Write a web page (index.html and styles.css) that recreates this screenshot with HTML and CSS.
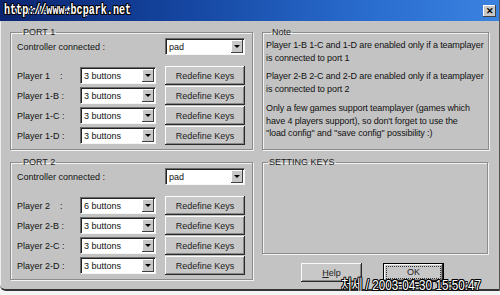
FILE: index.html
```html
<!DOCTYPE html>
<html lang="en">
<head>
  <meta charset="UTF-8">
  <title>Controller Setting</title>
  <link rel="stylesheet" href="styles.css">
</head>
<body>
  <div class="window">
    <div class="titlebar">
      <span class="title">Controller Setting</span>
      <span class="close">&#x2715;</span>
    </div>

    <div class="content">
      <div class="col left">
        <fieldset class="group port">
          <legend>PORT 1</legend>
          <div class="row ctrl">
            <span class="label wide">Controller connected :</span>
            <div class="combo pad"><span>pad</span><i></i></div>
          </div>
          <div class="row player">
            <span class="label">Player 1&nbsp;&nbsp;&nbsp;&nbsp;:</span>
            <div class="combo"><span>3 buttons</span><i></i></div>
            <button class="btn">Redefine Keys</button>
          </div>
          <div class="row player">
            <span class="label">Player 1-B :</span>
            <div class="combo"><span>3 buttons</span><i></i></div>
            <button class="btn">Redefine Keys</button>
          </div>
          <div class="row player">
            <span class="label">Player 1-C :</span>
            <div class="combo"><span>3 buttons</span><i></i></div>
            <button class="btn">Redefine Keys</button>
          </div>
          <div class="row player">
            <span class="label">Player 1-D :</span>
            <div class="combo"><span>3 buttons</span><i></i></div>
            <button class="btn">Redefine Keys</button>
          </div>
        </fieldset>

        <fieldset class="group port">
          <legend>PORT 2</legend>
          <div class="row ctrl">
            <span class="label wide">Controller connected :</span>
            <div class="combo pad"><span>pad</span><i></i></div>
          </div>
          <div class="row player">
            <span class="label">Player 2&nbsp;&nbsp;&nbsp;&nbsp;:</span>
            <div class="combo"><span>6 buttons</span><i></i></div>
            <button class="btn">Redefine Keys</button>
          </div>
          <div class="row player">
            <span class="label">Player 2-B :</span>
            <div class="combo"><span>3 buttons</span><i></i></div>
            <button class="btn">Redefine Keys</button>
          </div>
          <div class="row player">
            <span class="label">Player 2-C :</span>
            <div class="combo"><span>3 buttons</span><i></i></div>
            <button class="btn">Redefine Keys</button>
          </div>
          <div class="row player">
            <span class="label">Player 2-D :</span>
            <div class="combo"><span>3 buttons</span><i></i></div>
            <button class="btn">Redefine Keys</button>
          </div>
        </fieldset>
      </div>

      <div class="col right">
        <fieldset class="group note">
          <legend>Note</legend>
          <p>Player 1-B 1-C and 1-D are enabled only if a teamplayer<br>is connected to port 1</p>
          <p>Player 2-B 2-C and 2-D are enabled only if a teamplayer<br>is connected to port 2</p>
          <p>Only a few games support teamplayer (games which<br>have 4 players support), so don't forget to use the<br>''load config'' and ''save config'' possibility :)</p>
        </fieldset>

        <fieldset class="group keys">
          <legend>SETTING KEYS</legend>
        </fieldset>

        <div class="actions">
          <button class="btn"><u>H</u>elp</button>
          <button class="btn default"><span>OK</span></button>
        </div>
      </div>
    </div>

    <div class="stamp site">http://www.bcpark.net</div>
    <div class="stamp date">처세 / 2003-04-30 15:50:47</div>
  </div>
</body>
</html>
```

FILE: styles.css
```css
body {
  margin: 0;
  background: #f4f4f4;
  font-family: "Liberation Sans", Arial, sans-serif;
  font-size: 9px;
  color: #111;
}
.window {
  position: relative;
  width: 499px;
  height: 289px;
  background: #c3c3c3;
  border-right: 1px solid #555;
  border-bottom: 2px solid #333;
  border-bottom-left-radius: 6px;
  box-shadow: inset 1px 0 0 #eee;
}
.titlebar {
  height: 21px;
  background: linear-gradient(to right, #0a2470 0%, #14449e 35%, #2a6ed0 75%, #3a82e0 100%);
  display: flex;
  align-items: center;
  justify-content: space-between;
  padding: 0 3px 0 4px;
}
.title {
  color: #fff;
  font-weight: bold;
  font-size: 10px;
}
.close {
  width: 13px;
  height: 12px;
  background: #c8c8c8;
  box-shadow: inset -1px -1px #404040, inset 1px 1px #fff;
  font-size: 9px;
  font-weight: bold;
  line-height: 12px;
  text-align: center;
  color: #000;
}
.content {
  display: flex;
  gap: 9px;
  padding: 6px 11px 0 10px;
}
.col {
  display: flex;
  flex-direction: column;
}
.left {
  width: 243px;
  gap: 7px;
}
.right {
  width: 226px;
}
.group {
  margin: 0;
  padding: 0;
  border: 1px solid #8c8c8c;
  box-shadow: 1px 1px 0 #f2f2f2, inset 1px 1px 0 #f2f2f2;
  box-sizing: border-box;
}
legend {
  padding: 0 1px;
  margin-left: 5px;
  line-height: 11px;
  color: #222;
}
.port {
  height: 123px;
  padding: 0 7px 0 6px;
}
.row {
  display: flex;
  align-items: center;
}
.ctrl {
  justify-content: space-between;
  height: 17px;
  margin-bottom: 11px;
}
.player {
  height: 19px;
  margin-bottom: 1px;
}
.label {
  width: 63px;
  white-space: pre;
}
.label.wide {
  width: auto;
}
.combo {
  width: 76px;
  height: 17px;
  box-sizing: border-box;
  background: #fff;
  border: 1px solid;
  border-color: #6a6a6a #f6f6f6 #f6f6f6 #6a6a6a;
  box-shadow: inset 1px 1px 0 #222;
  display: flex;
  align-items: center;
  justify-content: space-between;
  padding: 0 1px 0 3px;
}
.combo.pad {
  width: 80px;
}
.combo span {
  padding-top: 1px;
}
.combo i {
  width: 12px;
  height: 13px;
  box-sizing: border-box;
  background: #c8c8c8;
  box-shadow: inset -1px -1px #404040, inset 1px 1px #fff;
  display: flex;
  align-items: center;
  justify-content: center;
}
.combo i::after {
  content: "";
  border-left: 3px solid transparent;
  border-right: 3px solid transparent;
  border-top: 3px solid #000;
}
.btn {
  font: inherit;
  color: #222;
  width: 80px;
  height: 19px;
  margin-left: 9px;
  padding: 0;
  border: none;
  background: #c8c8c8;
  box-shadow: inset -1px -1px #2a2a2a, inset 1px 1px #fbfbfb, inset -2px -2px #888;
}
.note {
  height: 123px;
  padding: 1px 4px 0 3px;
}
.note p {
  margin: 0 0 6px;
  line-height: 12.7px;
  font-size: 9px;
  letter-spacing: -0.12px;
  white-space: nowrap;
}
.keys {
  height: 97px;
  margin-top: 7px;
}
.actions {
  display: flex;
  gap: 21px;
  padding: 9px 0 0 39px;
}
.actions .btn {
  width: 61px;
  margin: 0;
}
.actions .default {
  box-shadow: inset 0 0 0 1px #000, inset -2px -2px #2a2a2a, inset 2px 2px #fbfbfb, inset -3px -3px #888;
  padding: 3px;
}
.actions .default span {
  display: block;
  height: 100%;
  box-sizing: border-box;
  border: 1px dotted #333;
  line-height: 11px;
}
.stamp {
  position: absolute;
  color: #fff;
  font-weight: bold;
  text-shadow: 1px 0 0 #000, -1px 0 0 #000, 0 1px 0 #000, 0 -1px 0 #000, 1px 1px 0 #000, -1px -1px 0 #000, 1px -1px 0 #000, -1px 1px 0 #000;
  white-space: nowrap;
  transform-origin: left top;
  line-height: 1;
}
.site {
  left: 4px;
  top: 3px;
  font-family: "Liberation Mono", "DejaVu Sans Mono", monospace;
  font-size: 14px;
  transform: scaleX(0.72);
}
.date {
  left: 341px;
  top: 277px;
  font-family: "Liberation Sans", "Noto Sans CJK KR", sans-serif;
  font-weight: normal;
  font-size: 15px;
  transform: scaleX(0.78);
}
```
